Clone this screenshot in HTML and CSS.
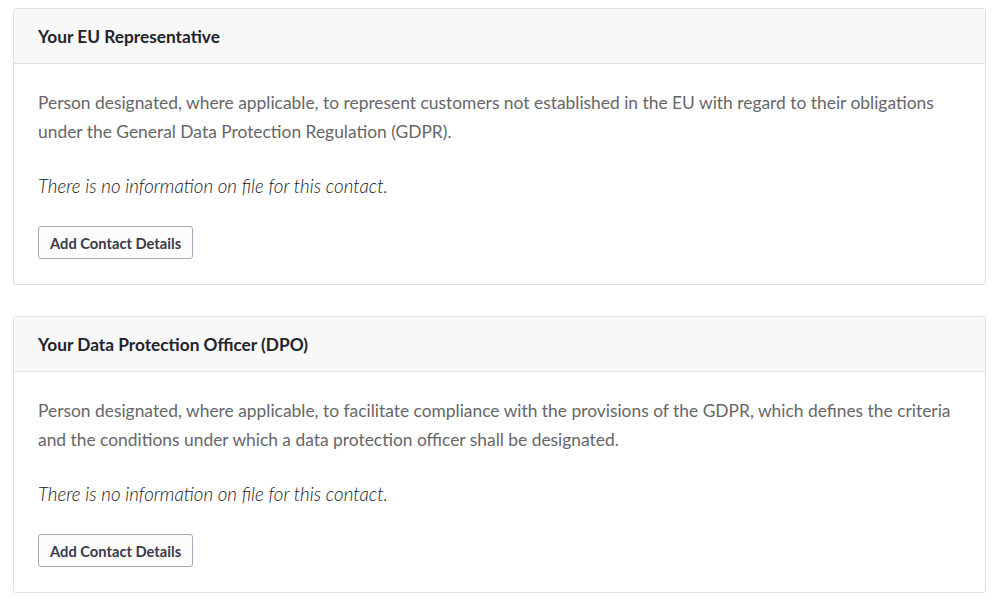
FILE: index.html
```html
<!DOCTYPE html>
<html>
<head>
<meta charset="utf-8">
<link rel="stylesheet" href="styles.css">
</head>
<body>
<div class="page">
  <section class="card">
    <div class="card-header">Your EU Representative</div>
    <div class="card-body">
      <p class="desc">Person designated, where applicable, to represent customers not established in the EU with regard to their obligations under the General Data Protection Regulation (GDPR).</p>
      <p class="empty">There is no information on file for this contact.</p>
      <button class="btn">Add Contact Details</button>
    </div>
  </section>
  <section class="card">
    <div class="card-header">Your Data Protection Officer (DPO)</div>
    <div class="card-body">
      <p class="desc">Person designated, where applicable, to facilitate compliance with the provisions of the GDPR, which defines the criteria and the conditions under which a data protection officer shall be designated.</p>
      <p class="empty">There is no information on file for this contact.</p>
      <button class="btn">Add Contact Details</button>
    </div>
  </section>
</div>
</body>
</html>
```
FILE: styles.css
```css
* { box-sizing: border-box; }
html, body { margin: 0; padding: 0; background: #fff; }
body { font-family: Lato, "Open Sans", sans-serif; }
.page {
  padding: 8px 14px 0 13px;
  display: flex;
  flex-direction: column;
  gap: 31px;
}
.card {
  border: 1px solid #dfdfe4;
  border-radius: 3px;
  overflow: hidden;
}
.card-header {
  background: #f8f8f9;
  border-bottom: 1px solid #dfdfe4;
  height: 55px;
  padding: 0 24px;
  display: flex;
  align-items: center;
  font-size: 17.3px;
  font-weight: 700;
  color: #23232b;
}
.card-body {
  padding: 24px 24px 25px;
}
.desc {
  margin: 0;
  font-size: 17.4px;
  line-height: 29px;
  color: #666669;
}
.empty {
  margin: 26px 0 0;
  font-size: 18.7px;
  line-height: 29px;
  font-style: italic;
  font-weight: 300;
  color: #17171d;
}
.btn {
  margin-top: 25px;
  height: 33px;
  padding: 0 11px;
  font-family: inherit;
  font-size: 14.7px;
  font-weight: 700;
  color: #3a3a48;
  background: #fcfcfd;
  border: 1px solid #aaa8bd;
  border-radius: 3px;
  display: block;
}
```
